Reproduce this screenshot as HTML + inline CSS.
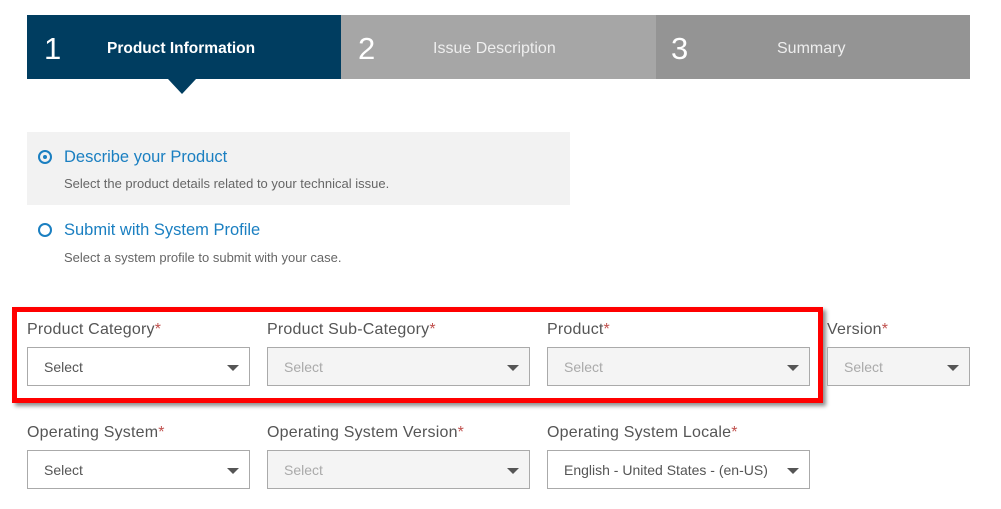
<!DOCTYPE html>
<html><head><meta charset="utf-8"><style>
*{margin:0;padding:0;box-sizing:border-box}
body{width:1001px;height:509px;background:#fff;font-family:"Liberation Sans",sans-serif;position:relative;overflow:hidden}
.a{position:absolute}
.tab{position:absolute;top:15px;height:64px;color:#fff}
.tab .n{position:absolute;top:16px;font-size:31px;font-weight:300}
.tab .t{position:absolute;top:25px;font-size:16px}
.lbl{position:absolute;font-size:16px;color:#555;letter-spacing:.2px}
.lbl b{color:#c0504d;font-weight:normal}
.sel{position:absolute;height:39px;border:1px solid #aaa;background:#fff;font-size:14px;color:#555;padding:11px 0 0 16px}
.sel.d{background:#f4f4f4;color:#aaa}
.sel:after{content:"";position:absolute;right:10px;top:17px;border-left:6px solid transparent;border-right:6px solid transparent;border-top:6px solid #555}
</style></head><body>
<div class="tab" style="left:27px;width:314px;background:#003d60"><span class="n" style="left:17px">1</span><span class="t" style="left:80px;font-weight:bold;font-size:15.5px">Product Information</span></div>
<div class="a" style="left:168px;top:79px;border-left:14px solid transparent;border-right:14px solid transparent;border-top:15px solid #003d60"></div>
<div class="tab" style="left:341px;width:315px;background:#a6a6a6"><span class="n" style="left:17px">2</span><span class="t" style="left:92px;color:#eee">Issue Description</span></div>
<div class="tab" style="left:656px;width:314px;background:#949494"><span class="n" style="left:15px">3</span><span class="t" style="left:121px;color:#eee">Summary</span></div>

<div class="a" style="left:27px;top:132px;width:543px;height:73px;background:#f2f2f2"></div>
<div class="a" style="left:38px;top:150px;width:14px;height:14px;border:2px solid #1a7fc1;border-radius:50%"><div style="margin:3px;width:4px;height:4px;border-radius:50%;background:#1a7fc1"></div></div>
<div class="a" style="left:64px;top:148px;font-size:16.5px;color:#1a7fc1">Describe your Product</div>
<div class="a" style="left:64px;top:176px;font-size:13px;color:#666">Select the product details related to your technical issue.</div>
<div class="a" style="left:38px;top:223px;width:14px;height:14px;border:2px solid #1a7fc1;border-radius:50%"></div>
<div class="a" style="left:64px;top:221px;font-size:16.5px;color:#1a7fc1">Submit with System Profile</div>
<div class="a" style="left:64px;top:250px;font-size:13px;color:#666">Select a system profile to submit with your case.</div>

<div class="a" style="left:12px;top:307px;width:811px;height:96px;border:5px solid #f00;box-shadow:3px 3px 4px rgba(0,0,0,.45)"></div>

<div class="lbl" style="left:27px;top:321px">Product Category<b>*</b></div>
<div class="lbl" style="left:267px;top:321px">Product Sub-Category<b>*</b></div>
<div class="lbl" style="left:547px;top:321px">Product<b>*</b></div>
<div class="lbl" style="left:827px;top:321px">Version<b>*</b></div>
<div class="sel" style="left:27px;top:347px;width:223px">Select</div>
<div class="sel d" style="left:267px;top:347px;width:263px">Select</div>
<div class="sel d" style="left:547px;top:347px;width:263px">Select</div>
<div class="sel d" style="left:827px;top:347px;width:143px">Select</div>

<div class="lbl" style="left:27px;top:424px">Operating System<b>*</b></div>
<div class="lbl" style="left:267px;top:424px">Operating System Version<b>*</b></div>
<div class="lbl" style="left:547px;top:424px">Operating System Locale<b>*</b></div>
<div class="sel" style="left:27px;top:450px;width:223px">Select</div>
<div class="sel d" style="left:267px;top:450px;width:263px">Select</div>
<div class="sel" style="left:547px;top:450px;width:263px">English - United States - (en-US)</div>
</body></html>
